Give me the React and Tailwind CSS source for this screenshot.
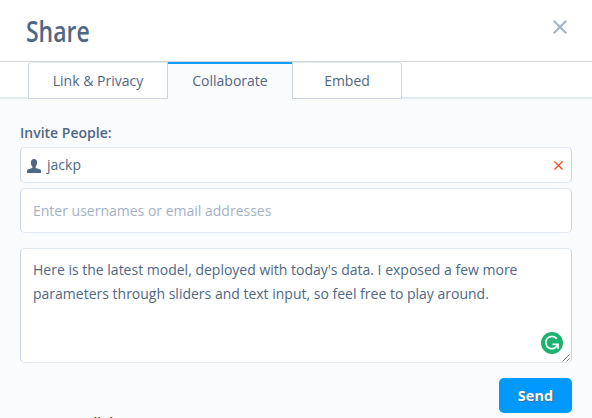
function UserIcon() {
  return (
    <svg width="14" height="14" viewBox="0 0 14 14" fill="#506784" className="mt-px block shrink-0">
      <path d="M7 0C4.900 0 3.900 1.300 3.900 3.300c0 1.900.5 3.400 1.400 4.200v1.500L1.200 10.300C.3 10.600 0 11.200 0 12v2h14v-2c0-.8-.3-1.400-1.200-1.700L8.700 9V7.500c.9-.8 1.400-2.300 1.400-4.200C10.100 1.300 9.100 0 7 0z" />
    </svg>
  );
}

function Cross({ size, color, stroke }) {
  return (
    <svg width={size} height={size} viewBox="0 0 14 14" fill="none" stroke={color} strokeWidth={stroke} className="block">
      <path d="M.7.7l12.600 12.600M13.300.7L.7 13.300" />
    </svg>
  );
}

function GrammarBadge() {
  return (
    <svg width="22" height="22" viewBox="0 0 22 22" className="absolute right-[8px] bottom-[8px]">
      <circle cx="11" cy="11" r="11" fill="#1cb370" />
      <path d="M15.800 6.600A6.200 6.200 0 1 0 16.900 12.300" fill="none" stroke="#fff" strokeWidth="1.700" />
      <path d="M11.500 12.300h5.500v4.500" fill="none" stroke="#fff" strokeWidth="1.700" />
    </svg>
  );
}

export default function App() {
  return (
    <div className="h-[418px] w-[592px] overflow-hidden bg-[#fafbfd] font-['Open_Sans','Noto_Sans',sans-serif] text-[14px] text-[#506784]">
      <header className="flex h-[62px] items-start justify-between border-b border-[#d3d5d9] bg-white pr-[25px] pl-[26px]">
        <h1 className="mt-[11px] origin-left scale-x-[0.82] text-[28px] leading-[40px] font-[550]">Share</h1>
        <button className="mt-[20px]" aria-label="Close">
          <Cross size={14} color="#a2b1c6" stroke={2} />
        </button>
      </header>

      <nav className="flex h-[37px] bg-white text-center leading-[35px]">
        <div className="w-[28px] border-b-2 border-[#e3e9f2]" />
        <div className="w-[140px] rounded-tl-[4px] border border-[#c8d4e3] border-t-[#dfe8f3]">Link &amp; Privacy</div>
        <div className="w-[124px] border-t-2 border-[#119dff] bg-[#fafbfd] leading-[33px]">Collaborate</div>
        <div className="w-[110px] rounded-tr-[4px] border border-[#c8d4e3] border-t-[#dfe8f3]">Embed</div>
        <div className="flex-1 border-b-2 border-[#e3e9f2]" />
      </nav>

      <main className="flex flex-col px-[20px] pt-[24px]">
        <h2 className="h-[24px] text-[14px] leading-[20px] font-semibold">Invite People:</h2>
        <div className="flex h-[36px] items-center rounded-[5px] border border-[#c8d4e3] border-y-[#dfe8f3] bg-white pr-[8px] pl-[6px]">
          <UserIcon />
          <span className="ml-[6px] flex-1 leading-[20px]">jackp</span>
          <Cross size={9} color="#f2502f" stroke={2.2} />
        </div>
        <div className="mt-[5px] flex h-[45px] items-center rounded-[5px] border border-[#c8d4e3] border-y-[#dfe8f3] bg-white px-[12px] text-[#a2b1c6]">
          Enter usernames or email addresses
        </div>
        <div className="relative mt-[15px] h-[115px] rounded-[5px] border border-[#c8d4e3] border-y-[#dfe8f3] bg-white px-[12px] pt-[9px] leading-[24px]">
          <p className="whitespace-nowrap">Here is the latest model, deployed with today's data. I exposed a few more</p>
          <p className="whitespace-nowrap">parameters through sliders and text input, so feel free to play around.</p>
          <GrammarBadge />
          <svg width="8" height="8" viewBox="0 0 8 8" stroke="#777" strokeWidth="1" className="absolute right-[1px] bottom-0">
            <path d="M.5 7.500l7-7M4.500 7.500l3-3" />
          </svg>
        </div>
        <button className="mt-[15px] h-[35px] w-[73px] self-end rounded-[5px] bg-[#0099ff] text-[14.500px] font-bold text-white [text-shadow:1px_1px_1px_#506784]">
          Send
        </button>
        <h2 className="text-[14px] leading-[20px] font-semibold text-[#444]">Current Collaborators:</h2>
      </main>
    </div>
  );
}
